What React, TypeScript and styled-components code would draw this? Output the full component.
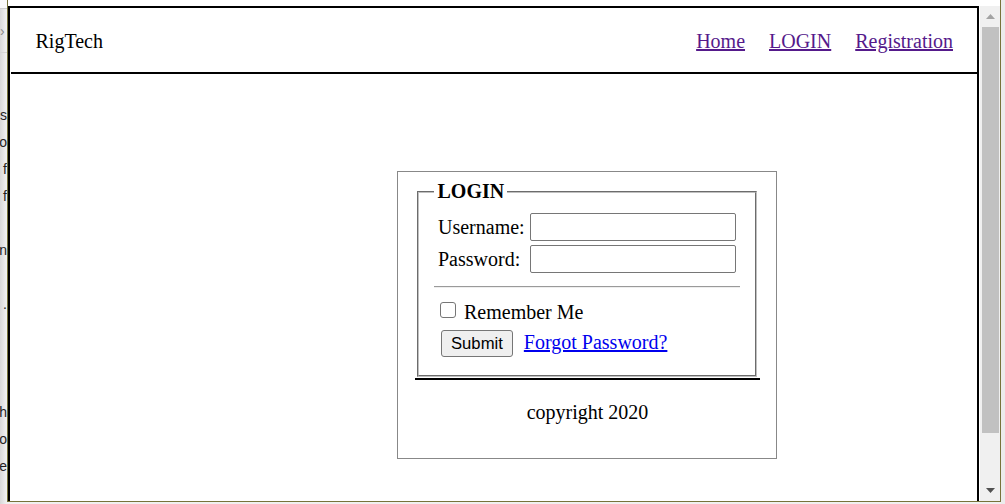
import React from "react";
import styled, { createGlobalStyle } from "styled-components";

const Global = createGlobalStyle`
  html, body { margin: 0; padding: 0; background: #f0f0f0; }
  body { width: 1005px; height: 504px; overflow: hidden; }
`;

const Screen = styled.div`
  display: flex;
  width: 1005px;
  height: 504px;
  background: #f0f0f0;
  overflow: hidden;
`;

const LeftStrip = styled.div`
  width: 7px;
  flex: none;
  height: 504px;
  overflow: hidden;
  display: flex;
  flex-direction: column;
  background: linear-gradient(to right, #d8d8d8, #f3f3f3);
  font-family: "Liberation Sans", Arial, sans-serif;
  font-size: 14px;
  color: #1e1e1e;
`;

const StripTop = styled.div`
  height: 8px;
  background: #fafafa;
  border-bottom: 1px solid #cfcfcf;
`;

const StripChevron = styled.div`
  height: 43px;
  border-bottom: 1px solid #d6d6d6;
  display: flex;
  align-items: center;
  color: #8a8a8a;
  font-size: 14px;
  line-height: 14px;
`;

const StripLines = styled.div`
  padding-top: 49px;
  display: flex;
  flex-direction: column;
`;

const Frag = styled.div`
  height: 27px;
  line-height: 27px;
  display: flex;
  justify-content: flex-end;
  white-space: nowrap;
`;

const Window = styled.div`
  width: 994px;
  height: 502px;
  flex: none;
  box-sizing: border-box;
  border-left: 1px solid #77733a;
  border-right: 1px solid #77733a;
  border-bottom: 1px solid #77733a;
  display: flex;
  flex-direction: column;
  background: #ffffff;
`;

const TopGap = styled.div`
  height: 6px;
  background: #ffffff;
`;

const Viewport = styled.div`
  flex: 1;
  display: flex;
  min-height: 0;
`;

const PageArea = styled.div`
  flex: 1;
  overflow: hidden;
  background: #ffffff;
  font-family: "Liberation Serif", "Times New Roman", serif;
  font-size: 20px;
  line-height: 23px;
  color: #000;
`;

const PageFrame = styled.div`
  box-sizing: border-box;
  margin-right: 1px;
  height: 640px;
  border: 2px solid #000;
`;

const Header = styled.header`
  margin-left: 1px;
  padding: 22px 24px 19px 24.5px;
  border-bottom: 2px solid #000;
  display: flex;
  justify-content: space-between;
  align-items: baseline;
`;

const Brand = styled.div``;

const Nav = styled.nav`
  display: flex;
  gap: 24px;
`;

const NavLink = styled.a`
  color: #551a8b;
  text-decoration: underline;
`;

const Main = styled.main`
  padding: 97px 0 0 387px;
`;

const LoginBox = styled.div`
  width: 380px;
  box-sizing: border-box;
  border: 1px solid #888888;
  padding: 8px 16px 0 17px;
`;

const Fieldset = styled.fieldset`
  margin: 0 3px 0 2px;
  border: 2px groove rgb(192, 192, 192);
  padding: 7px 15px 18px;
  min-width: 0;
`;

const Legend = styled.legend`
  padding: 0 2.5px 0 3.5px;
  font-weight: bold;
  font-size: 20px;
  line-height: 23px;
`;

const FieldGrid = styled.div`
  display: grid;
  grid-template-columns: 88px 206px;
  column-gap: 4px;
  row-gap: 4px;
  align-items: center;
  padding: 3px 0 3px 4px;
`;

const Label = styled.label`
  white-space: nowrap;
`;

const TextInput = styled.input`
  box-sizing: border-box;
  width: 206px;
  height: 28px;
  margin: 0;
  padding: 1px 2px;
  border: 1px solid #767676;
  border-radius: 2px;
  background: #fff;
  font-family: "Liberation Sans", Arial, sans-serif;
  font-size: 16px;
`;

const Divider = styled.hr`
  margin: 10px 0 13px;
  height: 0;
  border: none;
  border-top: 1px solid #9a9a9a;
  border-bottom: 1px solid #eeeeee;
`;

const CheckRow = styled.div`
  display: flex;
  align-items: flex-start;
  height: 23px;
`;

const Check = styled.input`
  appearance: none;
  -webkit-appearance: none;
  box-sizing: border-box;
  width: 16px;
  height: 16px;
  margin: 1px 8px 0 6px;
  border: 1px solid #767676;
  border-radius: 3px;
  background: #fff;
`;

const ActionRow = styled.div`
  margin-top: 6px;
  display: flex;
  align-items: baseline;
`;

const SubmitButton = styled.button`
  box-sizing: border-box;
  height: 27px;
  margin: 0 0 0 7px;
  padding: 0 9px;
  border: 1px solid #767676;
  border-radius: 3px;
  background: #efefef;
  color: #000;
  font-family: "Liberation Sans", Arial, sans-serif;
  font-size: 16.67px;
`;

const ForgotLink = styled.a`
  margin-left: 11px;
  color: #0000ee;
  text-decoration: underline;
`;

const Footer = styled.footer`
  margin-top: 1px;
  border-top: 2px solid #000;
  padding: 21px 0 34px;
  text-align: center;
`;

const Scrollbar = styled.div`
  width: 20px;
  flex: none;
  background: #f0f0f0;
  display: flex;
  flex-direction: column;
`;

const ArrowCell = styled.div`
  height: 21px;
  display: flex;
  align-items: center;
  justify-content: center;
`;

const Thumb = styled.div`
  height: 406px;
  margin: 0 1px 0 2px;
  background: #c1c1c1;
`;

const Track = styled.div`
  flex: 1;
`;

const RightStrip = styled.div`
  width: 4px;
  flex: none;
  background: #ececec;
`;

const Arrow = ({ up, color }: { up?: boolean; color: string }) => (
  <svg width="9" height="5" viewBox="0 0 9 5">
    <polygon points={up ? "0,5 9,5 4.5,0" : "0,0 9,0 4.5,5"} fill={color} />
  </svg>
);

const fragments = ["ss", "o", "f", "f", "", "n", "", ".", "", "", "", "h", "o", "e"];

export default function App() {
  return (
    <>
      <Global />
      <Screen>
        <LeftStrip>
          <StripTop />
          <StripChevron>›</StripChevron>
          <StripLines>
            {fragments.map((f, i) => (
              <Frag key={i}>{f}</Frag>
            ))}
          </StripLines>
        </LeftStrip>
        <Window>
          <TopGap />
          <Viewport>
            <PageArea>
              <PageFrame>
                <Header>
                  <Brand>RigTech</Brand>
                  <Nav>
                    <NavLink href="#">Home</NavLink>
                    <NavLink href="#">LOGIN</NavLink>
                    <NavLink href="#">Registration</NavLink>
                  </Nav>
                </Header>
                <Main>
                  <LoginBox>
                    <Fieldset>
                      <Legend>LOGIN</Legend>
                      <FieldGrid>
                        <Label>Username:</Label>
                        <TextInput type="text" />
                        <Label>Password:</Label>
                        <TextInput type="password" />
                      </FieldGrid>
                      <Divider />
                      <CheckRow>
                        <Check type="checkbox" />
                        <span>Remember Me</span>
                      </CheckRow>
                      <ActionRow>
                        <SubmitButton type="button">Submit</SubmitButton>
                        <ForgotLink href="#">Forgot Password?</ForgotLink>
                      </ActionRow>
                    </Fieldset>
                    <Footer>copyright 2020</Footer>
                  </LoginBox>
                </Main>
              </PageFrame>
            </PageArea>
            <Scrollbar>
              <ArrowCell>
                <Arrow up color="#a3a3a3" />
              </ArrowCell>
              <Thumb />
              <Track />
              <ArrowCell>
                <Arrow color="#505050" />
              </ArrowCell>
            </Scrollbar>
          </Viewport>
        </Window>
        <RightStrip />
      </Screen>
    </>
  );
}
